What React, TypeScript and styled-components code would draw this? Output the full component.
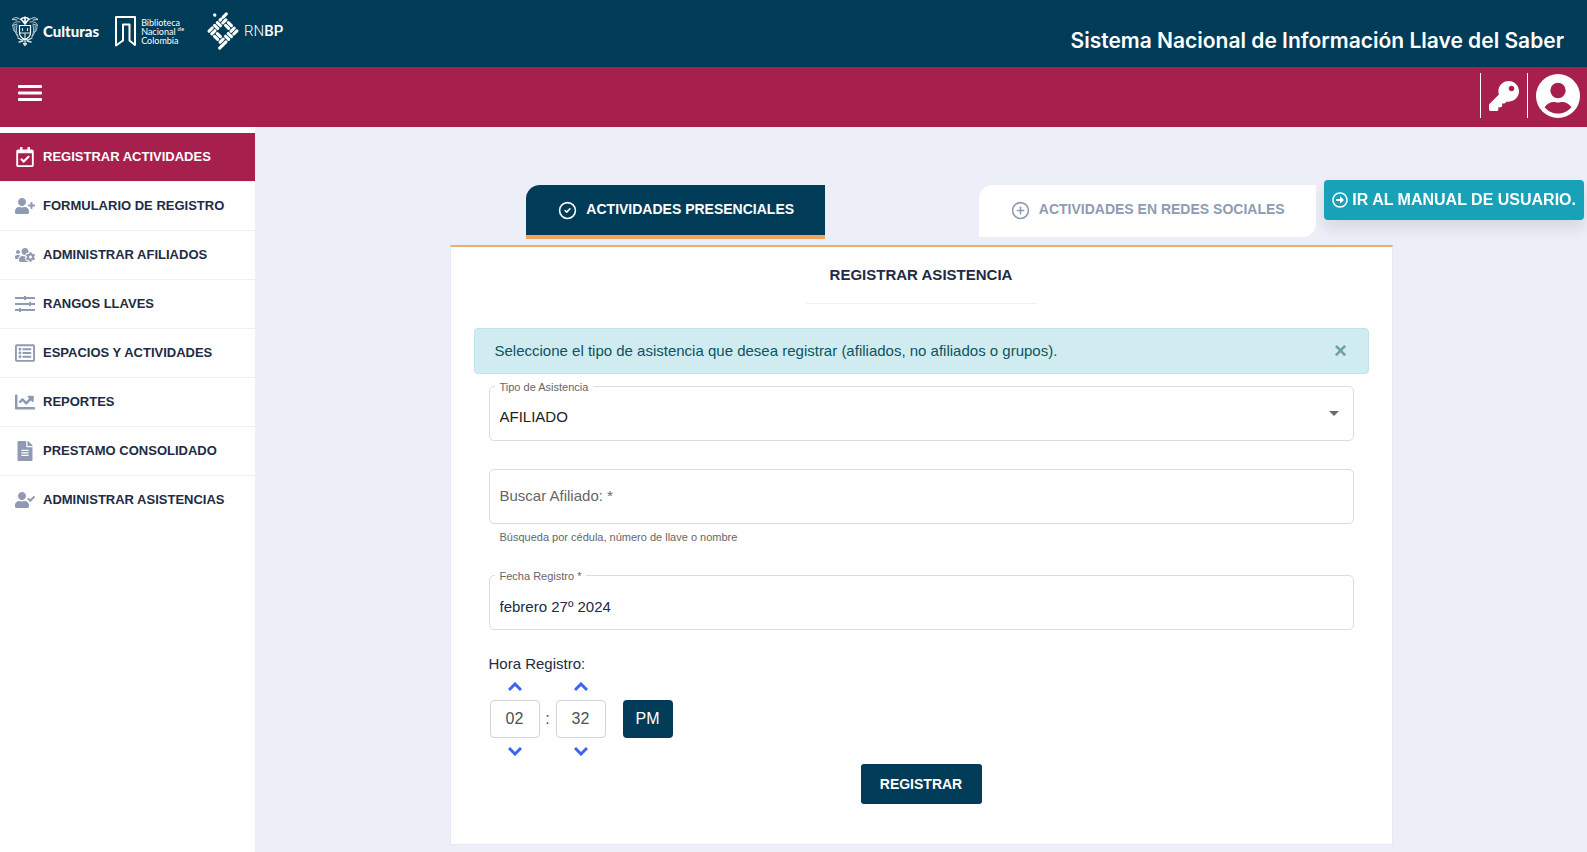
import React, { useState } from 'react';
import styled, { createGlobalStyle, css } from 'styled-components';
import {
  FaChartLine,
  FaFileAlt,
  FaKey,
  FaRegArrowAltCircleRight,
  FaRegCalendarCheck,
  FaRegListAlt,
  FaUserCheck,
  FaUserPlus,
  FaUsersCog,
} from 'react-icons/fa';
import { CircleCheck, CirclePlus } from 'lucide-react';

const color = {
  navy: '#003b57',
  wine: '#a61f4d',
  page: '#eceff8',
  orange: '#f4a35a',
  teal: '#17a2b8',
  ink: '#222b45',
  muted: '#8f9bb3',
  line: '#dcdcdc',
  hint: '#666666',
  blue: '#3d63f0',
};

const GlobalStyle = createGlobalStyle`
  *, *::before, *::after { box-sizing: border-box; }
  body {
    margin: 0;
    background: ${color.page};
    color: ${color.ink};
    font: 15px/20px "Liberation Sans", Arial, sans-serif;
  }
  button, input, select { font: inherit; color: inherit; margin: 0; }
  button { cursor: pointer; border: 0; padding: 0; background: none; }
`;

const Page = styled.div`
  min-height: 100vh;
  display: flex;
  flex-direction: column;
`;

const Brand = styled.header`
  display: flex;
  justify-content: space-between;
  height: 67px;
  padding: 0 23px 0 11px;
  background: ${color.navy};
  color: #fff;
`;

const Logos = styled.div`
  display: flex;
  align-items: center;
  height: 62px;
`;

const Logo = styled.div<{ $gap?: number }>`
  display: flex;
  align-items: center;
  gap: 4px;
  margin-right: ${(p) => p.$gap ?? 0}px;
  svg { flex: none; }
`;

const Ministry = styled.span`
  font: 900 15px/20px Lato, sans-serif;
`;

const Library = styled.span`
  font: 400 9px/9px Lato, sans-serif;
  sup { font-size: 6px; line-height: 1px; margin-left: 2px; }
`;

const Network = styled.span`
  font: 300 15px/20px Roboto, sans-serif;
  b { font-weight: 500; }
`;

const SystemTitle = styled.h1`
  margin: 0;
  padding-top: 26px;
  font: 600 21px/30px Inter, sans-serif;
  white-space: nowrap;
`;

const Toolbar = styled.div`
  display: flex;
  justify-content: space-between;
  height: 60px;
  padding: 6px 7px 6px 18px;
  background: ${color.wine};
  color: #fff;
`;

const MenuButton = styled.button`
  display: flex;
  align-items: center;
  height: 40px;
`;

const Actions = styled.div`
  display: flex;
  height: 45px;
`;

const Action = styled.button`
  display: flex;
  align-items: center;
  padding: 0 0 0 8px;
  border-left: 1px solid #fff;
  & + & { margin-left: 8px; }
`;

const Body = styled.div`
  display: flex;
  flex: 1;
`;

const Sidebar = styled.nav`
  width: 255px;
  flex: none;
  padding-top: 6px;
  background: #fff;
`;

const MenuList = styled.ul`
  margin: 0;
  padding: 0;
  list-style: none;
`;

const MenuItem = styled.li`
  border-bottom: 1px solid #edf0f5;
  &:last-child { border-bottom: 0; }
`;

const MenuLink = styled.a<{ $active?: boolean }>`
  display: flex;
  align-items: center;
  gap: 8px;
  height: 48px;
  padding-left: 15px;
  font-size: 13px;
  font-weight: 700;
  text-decoration: none;
  white-space: nowrap;
  color: ${(p) => (p.$active ? '#fff' : color.ink)};
  background: ${(p) => (p.$active ? color.wine : 'transparent')};
  svg {
    width: 20px;
    height: 20px;
    flex: none;
    color: ${(p) => (p.$active ? '#fff' : color.muted)};
  }
`;

const Main = styled.main`
  flex: 1;
  min-width: 0;
  padding: 58px 16px 8px;
`;

const Column = styled.div`
  max-width: 943px;
  margin: 0 auto;
`;

const Tabs = styled.div`
  display: flex;
  align-items: flex-start;
  justify-content: space-around;
  height: 60px;
`;

const Tab = styled.button<{ $active?: boolean }>`
  display: flex;
  align-items: center;
  gap: 9px;
  height: 52px;
  padding: 0 31px 4px 32px;
  font-size: 14px;
  font-weight: 700;
  white-space: nowrap;
  border-radius: 14px 0;
  color: ${color.muted};
  background: #fff;
  ${(p) =>
    p.$active &&
    css`
      height: 54px;
      padding-bottom: 2px;
      color: #fff;
      background: ${color.navy};
      border-bottom: 4px solid ${color.orange};
      border-radius: 14px 0 0 0;
    `}
  svg { margin-top: 3px; }
`;

const Card = styled.section`
  padding: 18px 23px 40px;
  background: #fff;
  border: 1px solid #e4e9f2;
  border-top: 2px solid #e9ae70;
`;

const CardTitle = styled.h2`
  width: 231px;
  margin: 0 auto 24px;
  padding-bottom: 18px;
  border-bottom: 1px solid #edf0f5;
  font-size: 15px;
  line-height: 20px;
  text-align: center;
  white-space: nowrap;
`;

const Alert = styled.div`
  display: flex;
  align-items: center;
  justify-content: space-between;
  height: 46px;
  padding: 0 20px;
  color: #0c5460;
  background: #d1ecf1;
  border: 1px solid #bee5eb;
  border-radius: 4px;
`;

const Close = styled.button`
  width: 14px;
  height: 20px;
  font-size: 22px;
  font-weight: 700;
  line-height: 20px;
  opacity: 0.5;
`;

const Form = styled.form`
  padding: 12px 15px 0;
`;

const Field = styled.div`
  position: relative;
  height: 55px;
  border: 1px solid ${color.line};
  border-radius: 5px;
  > svg {
    position: absolute;
    right: 14px;
    top: 24px;
    pointer-events: none;
  }
`;

const FloatingLabel = styled.label`
  position: absolute;
  left: 5px;
  top: -7px;
  padding: 0 5px;
  font-size: 11px;
  line-height: 14px;
  color: ${color.hint};
  background: #fff;
`;

const controlStyle = css`
  display: block;
  width: 100%;
  height: 100%;
  padding: 7px 10px 0;
  border: 0;
  outline: 0;
  background: transparent;
`;

const Select = styled.select`
  ${controlStyle}
  appearance: none;
  color: #212121;
`;

const TextInput = styled.input<{ $plain?: boolean }>`
  ${controlStyle}
  padding-top: ${(p) => (p.$plain ? 0 : 8)}px;
  padding-bottom: ${(p) => (p.$plain ? 2 : 0)}px;
  &::placeholder { color: ${color.hint}; opacity: 1; }
`;

const Helper = styled.p`
  margin: 0;
  height: 51px;
  padding: 5px 11px;
  font-size: 11px;
  line-height: 16px;
  color: ${color.hint};
`;

const Spacer = styled.div`
  height: 28px;
`;

const TimeGroup = styled.fieldset`
  margin: 24px 0 0;
  padding: 0;
  border: 0;
`;

const Legend = styled.legend`
  padding: 0 0 4px;
`;

const TimeGrid = styled.div`
  display: grid;
  grid-template-columns: 50px 16px 50px 67px;
  grid-template-rows: 18px 38px 18px;
  row-gap: 4px;
  padding: 0 1px;
  color: #495057;
  font-size: 16px;
`;

const Step = styled.button<{ $col: number; $row: number }>`
  grid-column: ${(p) => p.$col};
  grid-row: ${(p) => p.$row};
  display: flex;
  align-items: center;
  justify-content: center;
  color: ${color.blue};
`;

const TimeInput = styled.input<{ $col: number }>`
  grid-column: ${(p) => p.$col};
  grid-row: 2;
  width: 50px;
  height: 38px;
  padding: 0;
  text-align: center;
  border: 1px solid #ced4da;
  border-radius: 4px;
  outline: 0;
`;

const Colon = styled.span`
  grid-column: 2;
  grid-row: 2;
  align-self: center;
  text-align: center;
`;

const Meridian = styled.button`
  grid-column: 4;
  grid-row: 2;
  width: 50px;
  justify-self: end;
  color: #fff;
  background: ${color.navy};
  border-radius: 4px;
`;

const Submit = styled.button`
  display: block;
  width: 121px;
  height: 40px;
  margin: 4px auto 0;
  font-size: 14px;
  font-weight: 700;
  color: #fff;
  background: ${color.navy};
  border-radius: 3px;
`;

const ManualLink = styled.a`
  position: fixed;
  top: 180px;
  right: 3px;
  display: flex;
  align-items: center;
  gap: 4px;
  height: 40px;
  padding: 0 8px;
  font-size: 16px;
  font-weight: 700;
  white-space: nowrap;
  text-decoration: none;
  color: #fff;
  background: ${color.teal};
  border-radius: 4px;
  box-shadow: 0 8px 16px rgba(0, 0, 0, 0.1);
`;

const CoatOfArms = () => (
  <svg width="28" height="31" viewBox="0 0 28 31" fill="none" stroke="#fff" strokeLinecap="round" aria-hidden="true">
    <path d="M10 3c2-2 6-2 8 0M14 1v8M11 4l3 4 3-4" strokeWidth="1.6" />
    <path d="M10 4C6 .5 3 1.500 1 3.500l5 .5M18 4c4-3.500 7-2.500 9-.5l-5 .5" strokeWidth="1" opacity=".8" />
    <path d="M9 6C5 5 2 7 1.500 9.500L6 8M2 10c0 3 .5 5 2 6M4 10c-1 5 1 8 3 11M6 9c-1 4-1 8 1 11M19 6c4-1 7 1 7.500 3.500L22 8M26 10c0 3-.5 5-2 6M24 10c1 5-1 8-3 11M22 9c1 4 1 8-1 11" strokeWidth="1" opacity=".7" />
    <path d="M8.500 9.500h11v7c0 4-3 6-5.500 7-2.500-1-5.500-3-5.500-7z" strokeWidth="1.200" />
    <path d="M9 17h10M11.500 12.500v2M16.500 12.500v2M14 18v4" strokeWidth="1.100" opacity=".9" />
    <path d="M7 22l4 2 3-1 3 1 4-2M8 26l4-1M20 26l-4-1M14 24v5M12.500 27.500l1.500 2 1.500-2" strokeWidth="1.300" opacity=".85" />
  </svg>
);

const LibraryMark = () => (
  <svg width="22" height="31" viewBox="0 0 22 31" fill="none" stroke="#fff" strokeWidth="2" aria-hidden="true">
    <path d="M1 1h19v28l-5.500-4.500v-16h-6.500v16L1 29.500z" strokeLinejoin="round" />
  </svg>
);

const NetworkMark = () => (
  <svg width="34" height="40" viewBox="-17 -20 34 40" fill="none" stroke="#fff" strokeWidth="3.100" strokeLinecap="round" aria-hidden="true">
    <g transform="rotate(45)">
      <path d="M-9.750-14.500V-10M-9.750-7V-5.500M-5.850-10V-5.500M5.850-10V-5.500M9.750-10V-5.500M-9.750 5.500V10M-5.850 5.500V10M5.850 5.500V10M9.750 5.500V14.500" />
      <path d="M-2.200-9.750H2.200M-2.200-5.850H2.200M-2.200 9.750H2.200M-2.200 5.850H2.200M-10-1.950H-5.500M-10 1.950H-5.500M10-1.950H5.500M10 1.950H5.500M-17.400-5.500H-17" />
    </g>
  </svg>
);

const AccountIcon = () => (
  <svg width="44" height="44" viewBox="2 2 20 20" fill="currentColor" fillRule="evenodd" aria-hidden="true">
    <path d="M12 2a10 10 0 1 0 0 20 10 10 0 0 0 0-20zM12 6a3.500 3.500 0 1 1 0 7 3.500 3.500 0 0 1 0-7zM5.900 17.100C6.900 15.600 8.400 14.700 10 14.700c.8 0 1.300.3 2 .3s1.200-.3 2-.3c1.600 0 3.100.9 4.100 2.400C16.400 19.100 14.200 20 12 20s-4.400-.9-6.100-2.900z" />
  </svg>
);

const SlidersIcon = () => (
  <svg viewBox="0 0 20 20" fill="none" stroke="currentColor" strokeWidth="2" aria-hidden="true">
    <path d="M0 4h20M0 10h20M0 16h20" />
    <path d="M10 2v4M15 8v4M5 14v4" />
  </svg>
);

const Chevron = ({ down }: { down?: boolean }) => (
  <svg width="14" height="10" viewBox="0 0 14 10" fill="none" stroke="currentColor" strokeWidth="3" aria-hidden="true">
    <path d={down ? 'M1 2l6 6 6-6' : 'M1 8l6-6 6 6'} />
  </svg>
);

const menu = [
  { label: 'REGISTRAR ACTIVIDADES', Icon: FaRegCalendarCheck },
  { label: 'FORMULARIO DE REGISTRO', Icon: FaUserPlus },
  { label: 'ADMINISTRAR AFILIADOS', Icon: FaUsersCog },
  { label: 'RANGOS LLAVES', Icon: SlidersIcon },
  { label: 'ESPACIOS Y ACTIVIDADES', Icon: FaRegListAlt },
  { label: 'REPORTES', Icon: FaChartLine },
  { label: 'PRESTAMO CONSOLIDADO', Icon: FaFileAlt },
  { label: 'ADMINISTRAR ASISTENCIAS', Icon: FaUserCheck },
];

const pad = (n: number) => String(n).padStart(2, '0');

export default function App() {
  const [hour, setHour] = useState(2);
  const [minute, setMinute] = useState(32);
  const [pm, setPm] = useState(true);
  const [alertOpen, setAlertOpen] = useState(true);
  const [tab, setTab] = useState(0);

  const stepHour = (d: number) => setHour((h) => ((h - 1 + d + 12) % 12) + 1);
  const stepMinute = (d: number) => setMinute((m) => (m + d + 60) % 60);

  return (
    <Page>
      <GlobalStyle />
      <Brand>
        <Logos>
          <Logo $gap={16}>
            <CoatOfArms />
            <Ministry>Culturas</Ministry>
          </Logo>
          <Logo $gap={22}>
            <LibraryMark />
            <Library>
              Biblioteca
              <br />
              Nacional<sup>de</sup>
              <br />
              Colombia
            </Library>
          </Logo>
          <Logo>
            <NetworkMark />
            <Network>
              RN<b>BP</b>
            </Network>
          </Logo>
        </Logos>
        <SystemTitle>Sistema Nacional de Información Llave del Saber</SystemTitle>
      </Brand>

      <Toolbar>
        <MenuButton type="button" aria-label="Menú">
          <svg width="24" height="18" viewBox="0 0 24 18" fill="#fff" aria-hidden="true">
            <rect y="1" width="24" height="3" rx="1" />
            <rect y="7.500" width="24" height="3" rx="1" />
            <rect y="14" width="24" height="3" rx="1" />
          </svg>
        </MenuButton>
        <Actions>
          <Action type="button" aria-label="Llave">
            <FaKey size={30} />
          </Action>
          <Action type="button" aria-label="Usuario">
            <AccountIcon />
          </Action>
        </Actions>
      </Toolbar>

      <Body>
        <Sidebar>
          <MenuList>
            {menu.map(({ label, Icon }, i) => (
              <MenuItem key={label}>
                <MenuLink href="#" $active={i === 0}>
                  <Icon />
                  {label}
                </MenuLink>
              </MenuItem>
            ))}
          </MenuList>
        </Sidebar>

        <Main>
          <Column>
            <Tabs role="tablist">
              <Tab type="button" role="tab" aria-selected={tab === 0} $active={tab === 0} onClick={() => setTab(0)}>
                <CircleCheck size={19} />
                ACTIVIDADES PRESENCIALES
              </Tab>
              <Tab type="button" role="tab" aria-selected={tab === 1} $active={tab === 1} onClick={() => setTab(1)}>
                <CirclePlus size={19} />
                ACTIVIDADES EN REDES SOCIALES
              </Tab>
            </Tabs>

            <Card>
              <CardTitle>REGISTRAR ASISTENCIA</CardTitle>
              {alertOpen && (
                <Alert role="alert">
                  Seleccione el tipo de asistencia que desea registrar (afiliados, no afiliados o grupos).
                  <Close type="button" aria-label="Cerrar" onClick={() => setAlertOpen(false)}>
                    ×
                  </Close>
                </Alert>
              )}
              <Form onSubmit={(e) => e.preventDefault()}>
                <Field>
                  <Select id="tipo" defaultValue="AFILIADO">
                    <option>AFILIADO</option>
                  </Select>
                  <FloatingLabel htmlFor="tipo">Tipo de Asistencia</FloatingLabel>
                  <svg width="10" height="5" viewBox="0 0 10 5" aria-hidden="true">
                    <path d="M0 0h10L5 5z" fill="#6b6b6b" />
                  </svg>
                </Field>
                <Spacer />
                <Field>
                  <TextInput $plain aria-label="Buscar Afiliado" aria-describedby="buscar-ayuda" placeholder="Buscar Afiliado: *" />
                </Field>
                <Helper id="buscar-ayuda">Búsqueda por cédula, número de llave o nombre</Helper>
                <Field>
                  <TextInput id="fecha" defaultValue="febrero 27º 2024" />
                  <FloatingLabel htmlFor="fecha">Fecha Registro *</FloatingLabel>
                </Field>

                <TimeGroup>
                  <Legend>Hora Registro:</Legend>
                  <TimeGrid>
                    <Step type="button" $col={1} $row={1} aria-label="Aumentar hora" onClick={() => stepHour(1)}>
                      <Chevron />
                    </Step>
                    <Step type="button" $col={3} $row={1} aria-label="Aumentar minutos" onClick={() => stepMinute(1)}>
                      <Chevron />
                    </Step>
                    <TimeInput $col={1} aria-label="Hora" value={pad(hour)} readOnly />
                    <Colon>:</Colon>
                    <TimeInput $col={3} aria-label="Minutos" value={pad(minute)} readOnly />
                    <Meridian type="button" onClick={() => setPm(!pm)}>
                      {pm ? 'PM' : 'AM'}
                    </Meridian>
                    <Step type="button" $col={1} $row={3} aria-label="Disminuir hora" onClick={() => stepHour(-1)}>
                      <Chevron down />
                    </Step>
                    <Step type="button" $col={3} $row={3} aria-label="Disminuir minutos" onClick={() => stepMinute(-1)}>
                      <Chevron down />
                    </Step>
                  </TimeGrid>
                </TimeGroup>
                <Submit type="submit">REGISTRAR</Submit>
              </Form>
            </Card>
          </Column>
        </Main>
      </Body>
      <ManualLink href="#">
        <FaRegArrowAltCircleRight size={16} />
        IR AL MANUAL DE USUARIO.
      </ManualLink>
    </Page>
  );
}
